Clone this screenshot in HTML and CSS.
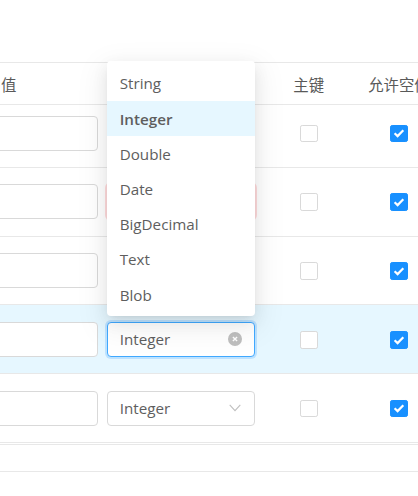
FILE: index.html
```html
<!DOCTYPE html>
<html lang="zh">
<head>
<meta charset="utf-8">
<link rel="stylesheet" href="styles.css">
</head>
<body>
<div class="page">
  <div class="table">
    <div class="grid thead">
      <div class="th th-a">值</div>
      <div class="th th-b"></div>
      <div class="th th-c">主键</div>
      <div class="th th-d">允许空值</div>
    </div>
    <div class="tbody">
      <div class="grid tr first">
        <div class="cell-a"><div class="input"></div></div>
        <div class="cell-b"><div class="select"></div></div>
        <div class="cell-c"><span class="cb"></span></div>
        <div class="cell-d"><span class="cb checked"><svg viewBox="0 0 18 18" width="18" height="18"><path d="M4.6 9.2 L7.6 12.1 L13.3 6.2" fill="none" stroke="#fff" stroke-width="2.2"/></svg></span></div>
      </div>
      <div class="grid tr">
        <div class="cell-a"><div class="input"></div></div>
        <div class="cell-b"><div class="select error"></div></div>
        <div class="cell-c"><span class="cb"></span></div>
        <div class="cell-d"><span class="cb checked"><svg viewBox="0 0 18 18" width="18" height="18"><path d="M4.6 9.2 L7.6 12.1 L13.3 6.2" fill="none" stroke="#fff" stroke-width="2.2"/></svg></span></div>
      </div>
      <div class="grid tr">
        <div class="cell-a"><div class="input"></div></div>
        <div class="cell-b"><div class="select"></div></div>
        <div class="cell-c"><span class="cb"></span></div>
        <div class="cell-d"><span class="cb checked"><svg viewBox="0 0 18 18" width="18" height="18"><path d="M4.6 9.2 L7.6 12.1 L13.3 6.2" fill="none" stroke="#fff" stroke-width="2.2"/></svg></span></div>
      </div>
      <div class="grid tr active">
        <div class="cell-a"><div class="input"></div></div>
        <div class="cell-b"><div class="select focused"><span class="val">Integer</span><svg class="clear" width="14" height="14" viewBox="0 0 14 14"><circle cx="7" cy="7" r="7" fill="#bfbfbf"/><path d="M4.9 4.9 L9.1 9.1 M9.1 4.9 L4.9 9.1" stroke="#fff" stroke-width="1.4"/></svg></div></div>
        <div class="cell-c"><span class="cb"></span></div>
        <div class="cell-d"><span class="cb checked"><svg viewBox="0 0 18 18" width="18" height="18"><path d="M4.6 9.2 L7.6 12.1 L13.3 6.2" fill="none" stroke="#fff" stroke-width="2.2"/></svg></span></div>
      </div>
      <div class="grid tr">
        <div class="cell-a"><div class="input"></div></div>
        <div class="cell-b"><div class="select"><span class="val">Integer</span><svg class="arrow" width="12" height="8" viewBox="0 0 12 8"><path d="M0.7 0.9 L6 6.6 L11.3 0.9" fill="none" stroke="#bfbfbf" stroke-width="1.1"/></svg></div></div>
        <div class="cell-c"><span class="cb"></span></div>
        <div class="cell-d"><span class="cb checked"><svg viewBox="0 0 18 18" width="18" height="18"><path d="M4.6 9.2 L7.6 12.1 L13.3 6.2" fill="none" stroke="#fff" stroke-width="2.2"/></svg></span></div>
      </div>
    </div>
    <div class="tfoot"></div>
  </div>

  <div class="dropdown">
    <div class="opt">String</div>
    <div class="opt selected">Integer</div>
    <div class="opt">Double</div>
    <div class="opt">Date</div>
    <div class="opt">BigDecimal</div>
    <div class="opt">Text</div>
    <div class="opt">Blob</div>
  </div>
</div>
</body>
</html>
```

FILE: styles.css
```css
html, body {
  margin: 0;
  padding: 0;
  background: #fff;
}
body {
  font-family: "Open Sans", "Noto Sans CJK SC", sans-serif;
  font-size: 15.2px;
  color: #5e5e5e;
}
.page {
  position: relative;
  width: 418px;
  height: 496px;
  overflow: hidden;
}
.table {
  padding-top: 62px;
  width: 440px;
}
.grid {
  display: grid;
  grid-template-columns: 102.2px 157.3px 98.5px 82px;
}
.thead {
  box-sizing: border-box;
  height: 43px;
  border-top: 1px solid #e8e8e8;
  border-bottom: 1px solid #e8e8e8;
  align-items: center;
}
.th {
  font-family: "Noto Sans CJK SC", sans-serif;
  font-size: 15.4px;
  color: #595959;
  white-space: nowrap;
  min-height: 20px;
}
.th-a { padding-left: 1px; }
.th-c, .th-d { text-align: center; }

.tbody {
  height: 337.75px;
  overflow: hidden;
}
.tr {
  box-sizing: border-box;
  height: 68.75px;
  padding-top: 16.5px;
  border-bottom: 1px solid #e8e8e8;
  align-items: start;
}
.tr.first { margin-top: -6px; }
.tr.active { background: #e6f7ff; }

.input {
  box-sizing: border-box;
  margin-left: -30px;
  width: 127.7px;
  height: 35.2px;
  background: #fff;
  border: 1px solid #d9d9d9;
  border-radius: 4px;
}
.cell-b { padding-left: 4.5px; }
.select {
  box-sizing: border-box;
  width: 148.3px;
  height: 35.2px;
  background: #fff;
  border: 1px solid #d9d9d9;
  border-radius: 4px;
  display: flex;
  align-items: center;
  justify-content: space-between;
  padding: 0 13px 0 12.1px;
}
.select.focused {
  border-color: #40a9ff;
  box-shadow: 0 0 0 2px rgba(24, 144, 255, 0.2);
  padding-right: 12px;
}
.select.error {
  border-color: #ff7875;
  box-shadow: 0 0 0 2px rgba(255, 77, 79, 0.2);
}
.val { line-height: 1; padding-top: 1px; }
.arrow { display: block; }
.clear { display: block; }

.cell-c, .cell-d {
  display: flex;
  justify-content: center;
  padding-top: 9.2px;
}
.cb {
  box-sizing: border-box;
  width: 17.6px;
  height: 17.6px;
  border: 1px solid #d9d9d9;
  border-radius: 2.2px;
  background: #fff;
  display: flex;
  align-items: center;
  justify-content: center;
  overflow: hidden;
}
.cb.checked {
  background: #1890ff;
  border-color: #1890ff;
}
.cb svg { display: block; flex: none; }

.tfoot {
  margin-top: 1px;
  height: 28px;
  box-sizing: border-box;
  border-top: 1px solid #e8e8e8;
  border-bottom: 1px solid #e8e8e8;
}

.dropdown {
  position: absolute;
  left: 106.5px;
  top: 61px;
  width: 148.5px;
  padding: 4.4px 0;
  background: #fff;
  border-radius: 4px;
  box-shadow: 0 3px 6px -4px rgba(0, 0, 0, 0.12), 0 6px 16px 0 rgba(0, 0, 0, 0.08), 0 9px 28px 8px rgba(0, 0, 0, 0.05);
}
.opt {
  box-sizing: border-box;
  height: 35.2px;
  padding: 1px 13.2px 0;
  display: flex;
  align-items: center;
  color: #5e5e5e;
}
.opt.selected {
  font-weight: 600;
  background: #e6f7ff;
}
```
